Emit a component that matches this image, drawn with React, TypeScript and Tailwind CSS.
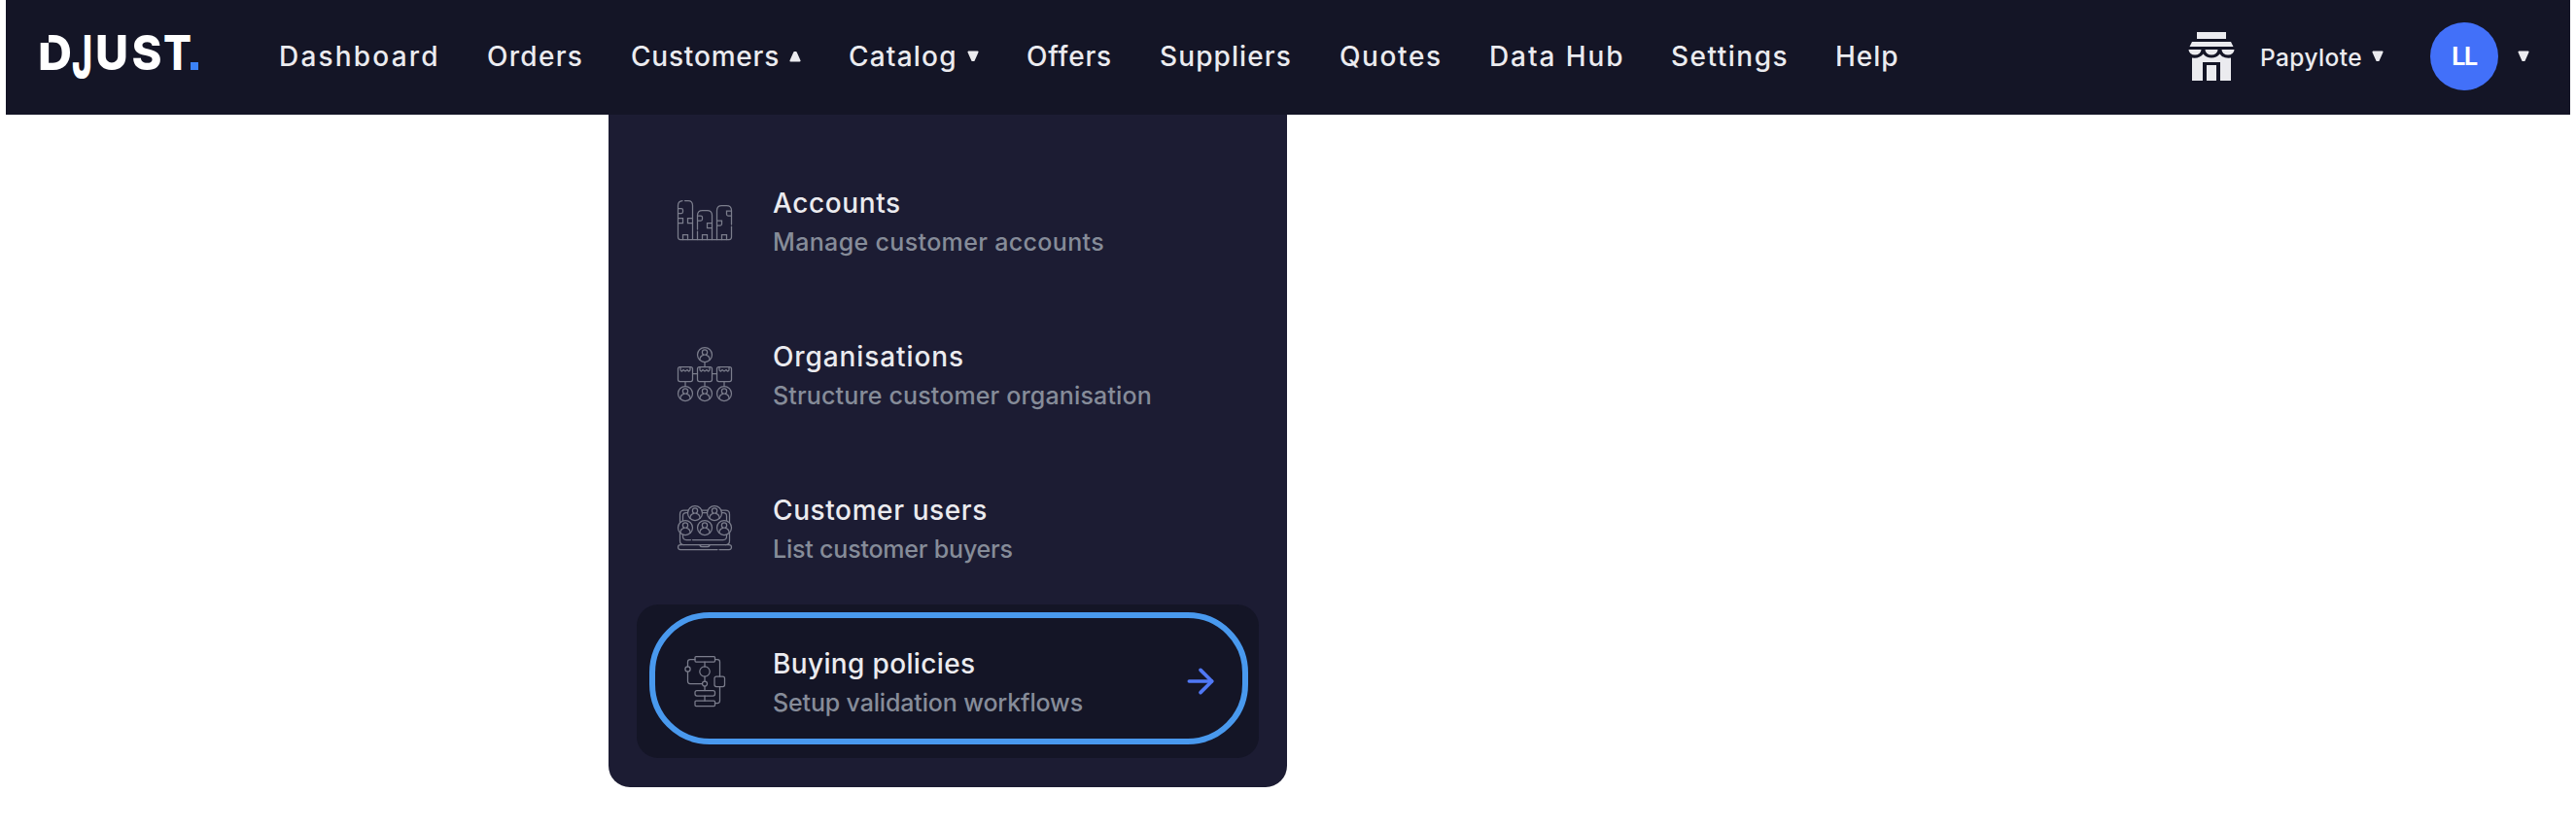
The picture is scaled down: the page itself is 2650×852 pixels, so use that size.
import type { ReactNode } from 'react';
import { ArrowRight } from 'lucide-react';
import clsx from 'clsx';

const NAV = [
  { label: 'Dashboard', box: 'w-[214px]', tracking: 'tracking-[2.2px]' },
  { label: 'Orders', box: 'w-[148px]', tracking: 'tracking-[1.3px]' },
  { label: 'Customers', box: 'w-[224px]', tracking: 'tracking-[0.8px]', caret: 'up' },
  { label: 'Catalog', box: 'w-[183px]', tracking: 'tracking-[1.2px]', caret: 'down' },
  { label: 'Offers', box: 'w-[137px]', tracking: 'tracking-[0.8px]' },
  { label: 'Suppliers', box: 'w-[185px]', tracking: 'tracking-[1.1px]' },
  { label: 'Quotes', box: 'w-[154px]', tracking: 'tracking-[1.6px]' },
  { label: 'Data Hub', box: 'w-[187px]', tracking: 'tracking-[1.9px]' },
  { label: 'Settings', box: 'w-[169px]', tracking: 'tracking-[1.5px]' },
  { label: 'Help', box: 'w-[70px]', tracking: 'tracking-[1px]' },
];

function Logo() {
  return (
    <svg width="176" height="96" viewBox="-6 -24 176 96" className="shrink-0">
      <g fill="#fff" fontFamily="Inter, sans-serif" fontWeight="800" fontSize="50">
        <text x="-3" y="38" textLength="35" lengthAdjust="spacingAndGlyphs">D</text>
        <text x="56" y="38" textLength="34" lengthAdjust="spacingAndGlyphs">U</text>
        <text x="93.5" y="38" textLength="31" lengthAdjust="spacingAndGlyphs">S</text>
        <text x="126" y="38" textLength="29" lengthAdjust="spacingAndGlyphs">T</text>
        <text x="32" y="46" fontSize="60" textLength="21" lengthAdjust="spacingAndGlyphs">J</text>
      </g>
      <rect x="-1" y="1" width="9" height="9" fill="#141526" />
      <rect x="154" y="30" width="8" height="8" fill="#3b82f6" />
    </svg>
  );
}

function Caret({ up = false }: { up?: boolean }) {
  return (
    <svg width="12" height="12" viewBox="0 0 12 12" className={clsx('shrink-0', up && 'rotate-180')}>
      <path d="M1.3 1.5h9.400L6.800 10.200H5.200z" fill="#ebebef" stroke="#ebebef" strokeWidth="1.8" strokeLinejoin="round" />
    </svg>
  );
}

function StoreIcon() {
  return (
    <svg width="48" height="50" viewBox="0 0 48 50" fill="#ebebef" className="shrink-0">
      <path d="M9 0h30v7H9zM4 10h40l2.5 5h-45z" />
      <path d="M.5 18h13a6.5 5.5 0 0 1-13 0zM17.5 18h13a6.5 5.5 0 0 1-13 0zM34.5 18h13a6.5 5.5 0 0 1-13 0z" />
      <path d="M4 26.5q8 1 11.5-4 3 4 8.500 4t8.500-4q3.500 5 11.500 4V50H33V31H15v19H4z" />
      <path d="M19 34h10v16H19z" />
    </svg>
  );
}

function Person({ x, y, fill = 'none' }: { x: number; y: number; fill?: string }) {
  return (
    <g transform={`translate(${x} ${y})`}>
      <circle r="7.5" fill={fill} />
      <circle cy="-2.5" r="2.6" />
      <path d="M-5 5.3v-.8C-5 2 -3 .8 -1.3 .3M5 5.3v-.8C5 2 3 .8 1.3 .3" />
    </g>
  );
}

function LineIcon({ children }: { children: ReactNode }) {
  return (
    <svg width="56" height="56" viewBox="0 0 56 56" fill="none" stroke="#7b7d8c" strokeWidth="1.25" strokeLinecap="round" className="shrink-0 overflow-visible">
      {children}
    </svg>
  );
}

function AccountsIcon() {
  return (
    <LineIcon>
      <path d="M5 7.6Q.5 8 .5 12.500V45q0 2.500 2.500 2.500H53q2.500 0 2.500-2.500V34M7.500 7.500H11q4.500 0 4.500 5v35" />
      <path d="M20.500 37V22.500q0-5 5-5h5q5 0 5 5v25M20.500 39v8.500M40.500 47.500v-30q0-5 5-5h5q5 0 5 5V32" />
      <path d="M.5 15.500h3.500q1.500 0 1.500 1.500v2q0 1.500-1.500 1.500H.5M.5 25.500h5v5H.5M15.500 25.500h-5v5h5M20.500 23h3.500q1.500 0 1.500 1.500v2q0 1.500-1.500 1.500h-3.500M35.500 30.500h-5v5h5M55.500 18h-5v3.500q0 1.500 1.500 1.500h3.500M40.500 28h5v3.500q0 1.500-1.500 1.500h-3.500" />
      <path d="M5.500 47.500v-5h5v5M25.500 47.500v-5h5v5M45.500 47.500v-5h5v5" />
    </LineIcon>
  );
}

function OrganisationsIcon() {
  return (
    <LineIcon>
      <Person x={28} y={8} />
      <path d="M28 15.500v5M15.500 27.500h5M35.500 27.500h5" />
      {[8, 28, 48].map((x) => (
        <g key={x}>
          <rect x={x - 7.5} y="20.500" width="15" height="15" rx="2" />
          <path d={`M${x - 5} 20.500v3q0 1.500 1.500 1.500l1.500-1.500 2 1.500 2-1.500 1.500 1.500q1.500 0 1.500-1.500v-3M${x} 35.500v5`} />
          <Person x={x} y={48} />
        </g>
      ))}
    </LineIcon>
  );
}

function UsersIcon() {
  return (
    <LineIcon>
      <path d="M2.500 36V14q0-4 4-4h43q4 0 4 4v27.500q0 4-4 4M2.500 36v5.500q0 4 4 4" />
      <path d="M13.500 40.500H9q-3.500 0-3.500-3.500V16q0-3.500 3.500-3.500h38q3.500 0 3.500 3.500v21q0 3.500-3.500 3.500H15.500" />
      <path d="M41 50.500H3q-2.500 0-2.500-2.500t2.500-2.500h50q2.500 0 2.500 2.500t-2.500 2.500H43M23 45.500q0 2 2 2h6q2 0 2-2" />
      <Person x={18} y={13} fill="#1c1c33" />
      <Person x={38} y={13} fill="#1c1c33" />
      <Person x={8} y={28} fill="#1c1c33" />
      <Person x={28} y={28} fill="#1c1c33" />
      <Person x={48} y={28} fill="#1c1c33" />
    </LineIcon>
  );
}

function PoliciesIcon() {
  return (
    <LineIcon>
      <rect x="18" y="2.500" width="20.500" height="5.500" rx="1" />
      <rect x="18" y="37.500" width="20.500" height="5.500" rx="2" />
      <rect x="18" y="48" width="20.500" height="5.500" rx="1" />
      <rect x="38" y="23" width="10.500" height="10.500" rx="2" />
      <circle cx="10.500" cy="15.500" r="2.600" />
      <circle cx="28" cy="18" r="5.200" />
      <circle cx="28" cy="30.500" r="2.500" />
      <path d="M18 5.500h-5q-2.500 0-2.500 2.500v5M10.500 18v10q0 2.500 2.500 2.500h12.500M38.500 5.500H41q2.500 0 2.500 2.500v15M43.500 33.500V48q0 2.500-2.500 2.500h-2.500M28 8v5M28 23v5M28 33v4.500M28 43v5" />
    </LineIcon>
  );
}

const MENU = [
  { title: 'Accounts', text: 'Manage customer accounts', icon: <AccountsIcon />, t1: 'tracking-[0.6px]', t2: 'tracking-[0.35px]' },
  { title: 'Organisations', text: 'Structure customer organisation', icon: <OrganisationsIcon />, t1: 'tracking-[0.9px]', t2: 'tracking-[0.15px]' },
  { title: 'Customer users', text: 'List customer buyers', icon: <UsersIcon />, t1: 'tracking-[0.6px]', t2: 'tracking-[-0.2px]' },
  { title: 'Buying policies', text: 'Setup validation workflows', icon: <PoliciesIcon />, t1: 'tracking-[0.35px]', t2: 'tracking-[-0.15px]', active: true },
];

export default function App() {
  return (
    <div className="h-[852px] w-[2650px] overflow-hidden bg-white px-1.5 font-['Inter',sans-serif] font-medium text-[#ebebef]">
      {/* Header */}
      <header className="flex h-[118px] items-center bg-[#141526] pb-0.5">
        <div className="ml-[30px] w-[251px]">
          <Logo />
        </div>
        <nav className="flex items-center">
          {NAV.map((item) => (
            <a key={item.label} className={clsx('flex shrink-0 items-center gap-2.5 whitespace-nowrap text-[28px] leading-10', item.box, item.tracking)}>
              {item.label}
              {item.caret && <Caret up={item.caret === 'up'} />}
            </a>
          ))}
        </nav>
        <div className="ml-auto mr-[42px] flex items-center">
          <StoreIcon />
          <div className="ml-[26px] flex w-[175px] items-center gap-2.5 text-[24.5px] leading-8">
            <span className="w-[105px] pt-px tracking-[0.4px]">Papylote</span>
            <Caret />
          </div>
          <div className="flex size-[70px] items-center justify-center rounded-full bg-[#4270f9] pt-px text-[25px] font-bold tracking-[-1.5px] text-white">LL</div>
          <div className="ml-5">
            <Caret />
          </div>
        </div>
      </header>

      {/* Customers menu */}
      <div className="ml-[620px] h-[692px] w-[698px] rounded-b-[22px] bg-[#1c1c33] px-[29px] py-[30px]">
        {MENU.map((item) => (
          <div key={item.title} className={clsx('relative flex h-[158px] items-center rounded-[22px] pl-[42px]', item.active && 'bg-[#141526]')}>
            {item.icon}
            <div className="ml-[42px] whitespace-nowrap pt-1">
              <div className={clsx('text-[28px] leading-10', item.t1)}>{item.title}</div>
              <div className={clsx('text-[25px] leading-10 text-[#868c99]', item.t2)}>{item.text}</div>
            </div>
            {item.active && (
              <>
                <ArrowRight className="ml-auto mr-[40px] size-10 text-[#5078f5]" strokeWidth={2.2} />
                <div className="absolute left-[13px] top-2 h-[136px] w-[616px] rounded-[62px] border-[6px] border-[#4999ee]" />
              </>
            )}
          </div>
        ))}
      </div>
    </div>
  );
}
